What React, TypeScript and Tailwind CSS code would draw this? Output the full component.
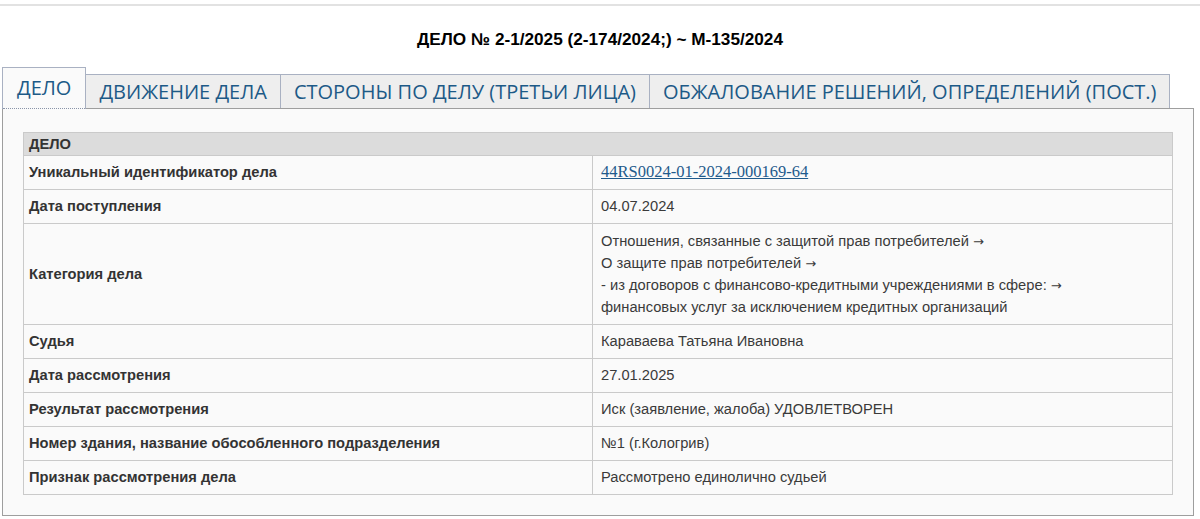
const Arrow = () => <span className="font-['DejaVu_Sans',sans-serif] text-[13px] leading-[0]">→</span>;

const ROWS: { label: string; value: React.ReactNode; tall?: boolean }[] = [
  {
    label: 'Уникальный идентификатор дела',
    value: (
      <a href="#" className="font-['Liberation_Serif',serif] text-[16.5px] leading-[0] text-[#1f5b8c] underline">
        44RS0024-01-2024-000169-64
      </a>
    ),
  },
  { label: 'Дата поступления', value: '04.07.2024' },
  {
    label: 'Категория дела',
    tall: true,
    value: (
      <>
        Отношения, связанные с защитой прав потребителей <Arrow /><br />
        О защите прав потребителей <Arrow /><br />
        - из договоров с финансово-кредитными учреждениями в сфере: <Arrow /><br />
        финансовых услуг за исключением кредитных организаций
      </>
    ),
  },
  { label: 'Судья', value: 'Караваева Татьяна Ивановна' },
  { label: 'Дата рассмотрения', value: '27.01.2025' },
  { label: 'Результат рассмотрения', value: 'Иск (заявление, жалоба) УДОВЛЕТВОРЕН' },
  { label: 'Номер здания, название обособленного подразделения', value: '№1 (г.Кологрив)' },
  { label: 'Признак рассмотрения дела', value: 'Рассмотрено единолично судьей' },
];

const TABS = ['ДВИЖЕНИЕ ДЕЛА', 'СТОРОНЫ ПО ДЕЛУ (ТРЕТЬИ ЛИЦА)', 'ОБЖАЛОВАНИЕ РЕШЕНИЙ, ОПРЕДЕЛЕНИЙ (ПОСТ.)'];

export default function App() {
  return (
    <div className="min-h-[519px] bg-white font-['Liberation_Sans',Arial,sans-serif] text-[#333]">
      <div className="pt-[4px]">
        <div className="h-[2px] bg-[#e2e2e2]" />
      </div>

      <h1 className="mt-[23px] text-center text-[17.2px] font-bold leading-[20px] text-black">
        ДЕЛО № 2-1/2025 (2-174/2024;) ~ М-135/2024
      </h1>

      <div className="mt-[18px] px-[2px]">
        {/* tabs */}
        <div className="flex items-end font-['Open_Sans',sans-serif] text-[20px] text-[#1d5a87]">
          <div className="relative z-10 -mb-px flex h-[42px] items-start border border-b-0 border-[#a9b1c2] bg-[#fafafa] px-[14px] pt-[5px]">
            ДЕЛО
            <div className="absolute bottom-0 left-0 right-0 border-b border-dotted border-[#8a94a8]" />
          </div>
          {TABS.map(t => (
            <div
              key={t}
              className="-ml-px flex h-[34px] items-center border border-b-0 border-[#a9b1c2] bg-[#eeeeee] px-[13px] first:ml-0"
            >
              {t}
            </div>
          ))}
        </div>

        {/* panel */}
        <div className="mr-[4px] border border-[#9e9e9e] bg-[#fafafa] px-[20px] pt-[23px] pb-[20px]">
          <table className="w-full border-collapse text-[14.7px]">
            <tbody>
              <tr>
                <td colSpan={2} className="border border-[#cacaca] bg-[#dcdcdc] px-[5px] py-[2px] leading-[18px] font-bold">
                  ДЕЛО
                </td>
              </tr>
              {ROWS.map(r => (
                <tr key={r.label}>
                  <td className="w-[569px] border border-[#cacaca] px-[5px] py-[6px] leading-[21px] font-bold">
                    {r.label}
                  </td>
                  <td
                    className={`border border-[#cacaca] py-[6px] pr-[5px] pl-[8px] text-[#3a3a3a] ${
                      r.tall ? 'leading-[22px]' : 'leading-[21px]'
                    }`}
                  >
                    {r.value}
                  </td>
                </tr>
              ))}
            </tbody>
          </table>
        </div>
      </div>
    </div>
  );
}
